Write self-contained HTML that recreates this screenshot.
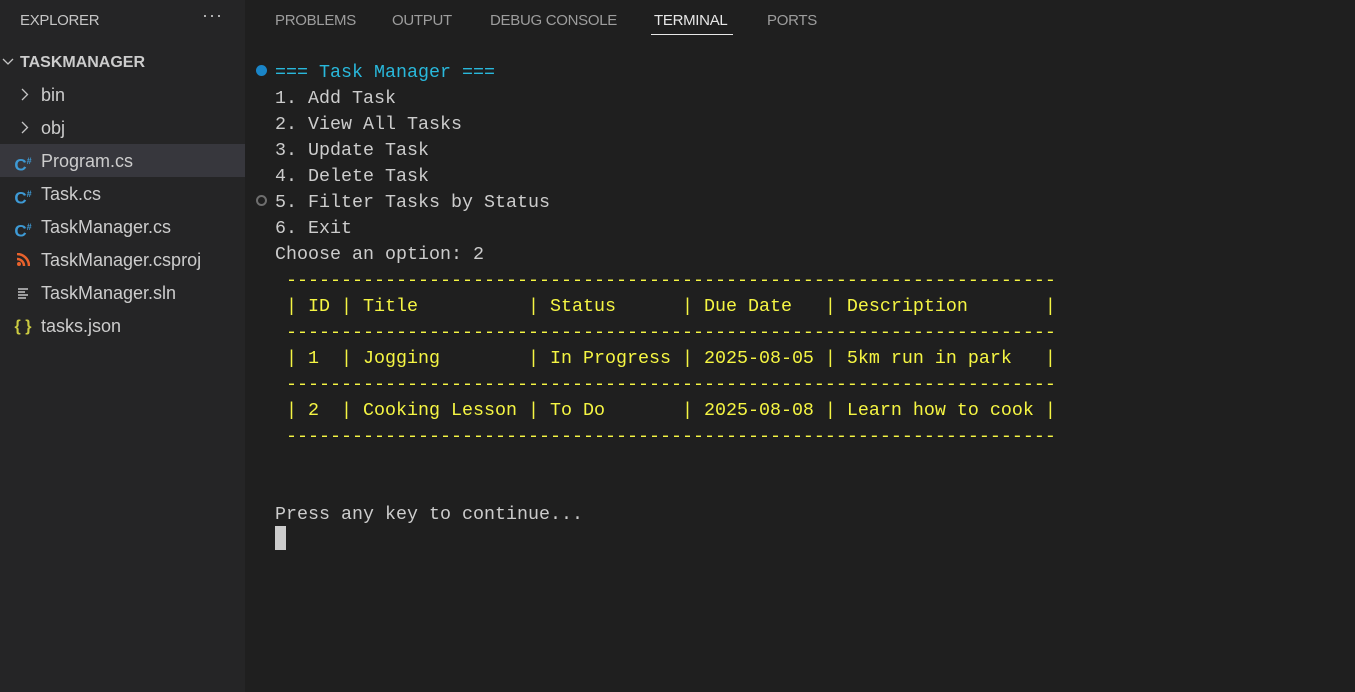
<!DOCTYPE html>
<html><head><meta charset="utf-8"><style>
*{margin:0;padding:0;box-sizing:border-box}
body{width:1355px;height:692px;background:#1f1f1f;overflow:hidden;position:relative;font-family:"Liberation Sans",sans-serif}
#side{position:absolute;left:0;top:0;width:245px;height:692px;background:#252526}
.hdr{position:absolute;left:20px;top:12px;font-size:15px;color:#c5c5c5;letter-spacing:-0.3px}
.dots{position:absolute;left:202px;top:5px;font-size:18px;color:#c5c5c5;letter-spacing:1px}
.row{position:absolute;left:0;width:245px;height:33px;font-size:18px;color:#cccccc;line-height:35px}
.row .t{position:absolute;left:41px;top:0}
.row .i{position:absolute;left:12px;top:0;width:22px;text-align:center}
.sel{background:#37373d}
.cs{color:#3e9ad5;font-weight:bold;font-size:17px}
.cs sup{font-size:9px}
.tab{position:absolute;top:12px;font-size:15px;color:#9d9d9d;letter-spacing:-0.3px}
#term{position:absolute;left:275px;top:60px;font-family:"Liberation Mono",monospace;font-size:18.33px;line-height:26px;color:#cccccc;white-space:pre}
.y{color:#f5f543}
.b{color:#29b8db}
</style></head><body>
<div id="side">
<div class="hdr">EXPLORER</div><div class="dots">···</div>
<div class="row" style="top:45px;font-weight:bold;font-size:16px;color:#cccccc"><svg style="position:absolute;left:2px;top:13px" width="12" height="8" viewBox="0 0 12 8"><path d="M1 1l5 5 5-5" stroke="#c5c5c5" stroke-width="1.3" fill="none"/></svg><span style="position:absolute;left:20px">TASKMANAGER</span></div>
<div class="row" style="top:78px"><svg style="position:absolute;left:21px;top:10px" width="8" height="13" viewBox="0 0 8 13"><path d="M1 1l5.5 5.5L1 12" stroke="#c5c5c5" stroke-width="1.3" fill="none"/></svg><span class="t">bin</span></div>
<div class="row" style="top:111px"><svg style="position:absolute;left:21px;top:10px" width="8" height="13" viewBox="0 0 8 13"><path d="M1 1l5.5 5.5L1 12" stroke="#c5c5c5" stroke-width="1.3" fill="none"/></svg><span class="t">obj</span></div>
<div class="row sel" style="top:144px"><span class="i cs">C<sup>#</sup></span><span class="t">Program.cs</span></div>
<div class="row" style="top:177px"><span class="i cs">C<sup>#</sup></span><span class="t">Task.cs</span></div>
<div class="row" style="top:210px"><span class="i cs">C<sup>#</sup></span><span class="t">TaskManager.cs</span></div>
<div class="row" style="top:243px"><span class="i"><svg width="14" height="14" viewBox="0 0 14 14" style="vertical-align:-1px"><circle cx="3" cy="11" r="2" fill="#e8622c"/><path d="M1 6a7 7 0 0 1 7 7M1 1a12 12 0 0 1 12 12" stroke="#e8622c" stroke-width="2.5" fill="none"/></svg></span><span class="t">TaskManager.csproj</span></div>
<div class="row" style="top:276px"><span class="i"><svg width="14" height="14" viewBox="0 0 14 14" style="vertical-align:-1px"><path d="M2 3h10M2 6h7M2 9h10M2 12h8" stroke="#c5c5c5" stroke-width="1.4"/></svg></span><span class="t">TaskManager.sln</span></div>
<div class="row" style="top:309px"><span class="i" style="color:#cbcb41;font-weight:bold;font-size:16px">{ }</span><span class="t">tasks.json</span></div>
</div>
<div class="tab" style="left:275px">PROBLEMS</div>
<div class="tab" style="left:392px">OUTPUT</div>
<div class="tab" style="left:490px">DEBUG CONSOLE</div>
<div class="tab" style="left:654px;color:#e7e7e7">TERMINAL</div>
<div style="position:absolute;left:651px;top:34px;width:82px;height:1px;background:#e7e7e7"></div>
<div class="tab" style="left:767px">PORTS</div>
<div style="position:absolute;left:256px;top:65px;width:11px;height:11px;border-radius:50%;background:#1a85c8"></div>
<div style="position:absolute;left:256px;top:195px;width:11px;height:11px;border-radius:50%;border:2px solid #6e6e6e"></div>
<div id="term"><span class="b">=== Task Manager ===</span>
1. Add Task
2. View All Tasks
3. Update Task
4. Delete Task
5. Filter Tasks by Status
6. Exit
Choose an option: 2
<span class="y"> ----------------------------------------------------------------------
 | ID | Title          | Status      | Due Date   | Description       |
 ----------------------------------------------------------------------
 | 1  | Jogging        | In Progress | 2025-08-05 | 5km run in park   |
 ----------------------------------------------------------------------
 | 2  | Cooking Lesson | To Do       | 2025-08-08 | Learn how to cook |
 ----------------------------------------------------------------------</span>


Press any key to continue...</div>
<div style="position:absolute;left:275px;top:526px;width:11px;height:24px;background:#cccccc"></div>
</body></html>
